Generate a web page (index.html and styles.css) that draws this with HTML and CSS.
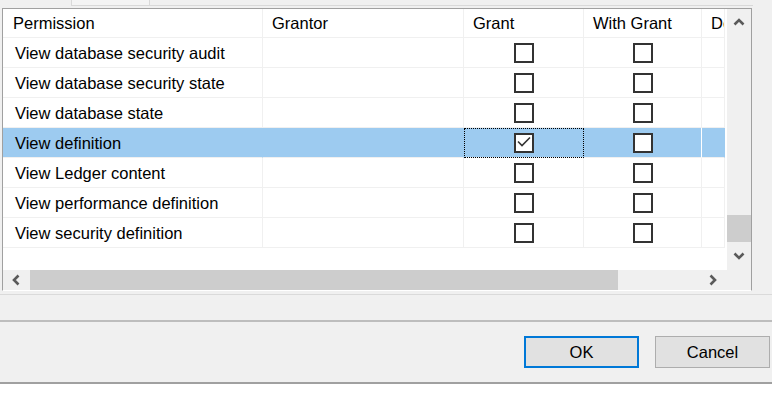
FILE: index.html
```html
<!DOCTYPE html>
<html>
<head>
<meta charset="utf-8">
<link rel="stylesheet" href="styles.css">
</head>
<body>
<div class="dialog">
  <div class="tabs"><div class="tab-gap"></div><div class="tab"></div><div class="tab-rest"></div></div>
  <div class="frame">
    <div class="table">
      <div class="row head">
        <div class="cell first">Permission</div>
        <div class="cell">Grantor</div>
        <div class="cell">Grant</div>
        <div class="cell">With Grant</div>
        <div class="cell">Deny</div>
      </div>
      <div class="row">
        <div class="cell name">View database security audit</div>
        <div class="cell"></div>
        <div class="cell box"><span class="cb"></span></div>
        <div class="cell box"><span class="cb"></span></div>
        <div class="cell"></div>
      </div>
      <div class="row">
        <div class="cell name">View database security state</div>
        <div class="cell"></div>
        <div class="cell box"><span class="cb"></span></div>
        <div class="cell box"><span class="cb"></span></div>
        <div class="cell"></div>
      </div>
      <div class="row">
        <div class="cell name">View database state</div>
        <div class="cell"></div>
        <div class="cell box"><span class="cb"></span></div>
        <div class="cell box"><span class="cb"></span></div>
        <div class="cell"></div>
      </div>
      <div class="row sel">
        <div class="cell name">View definition</div>
        <div class="cell"></div>
        <div class="cell box focus"><span class="cb"><svg class="check" viewBox="0 0 16 16" width="16" height="16"><polyline points="2,6.5 6,10.5 14,2.5" fill="none" stroke="#333" stroke-width="1.6"/></svg></span></div>
        <div class="cell box wg"><span class="cb"></span></div>
        <div class="cell"></div>
      </div>
      <div class="row">
        <div class="cell name">View Ledger content</div>
        <div class="cell"></div>
        <div class="cell box"><span class="cb"></span></div>
        <div class="cell box"><span class="cb"></span></div>
        <div class="cell"></div>
      </div>
      <div class="row">
        <div class="cell name">View performance definition</div>
        <div class="cell"></div>
        <div class="cell box"><span class="cb"></span></div>
        <div class="cell box"><span class="cb"></span></div>
        <div class="cell"></div>
      </div>
      <div class="row">
        <div class="cell name">View security definition</div>
        <div class="cell"></div>
        <div class="cell box"><span class="cb"></span></div>
        <div class="cell box"><span class="cb"></span></div>
        <div class="cell"></div>
      </div>
    </div>
    <div class="vscroll">
      <div class="sb-btn up"><svg viewBox="0 0 12 8" width="12" height="8"><polyline points="1.5,6.5 6,2 10.5,6.5" fill="none" stroke="#5a5a5a" stroke-width="2.6"/></svg></div>
      <div class="vtrack"><div class="vthumb"></div></div>
      <div class="sb-btn down"><svg viewBox="0 0 12 8" width="12" height="8"><polyline points="1.5,1.5 6,6 10.5,1.5" fill="none" stroke="#5a5a5a" stroke-width="2.6"/></svg></div>
    </div>
    <div class="hscroll">
      <div class="hbtn left"><svg viewBox="0 0 8 12" width="8" height="12"><polyline points="6.5,1.5 2,6 6.5,10.5" fill="none" stroke="#5a5a5a" stroke-width="2.6"/></svg></div>
      <div class="htrack"><div class="hthumb"></div></div>
      <div class="hbtn right"><svg viewBox="0 0 8 12" width="8" height="12"><polyline points="1.5,1.5 6,6 1.5,10.5" fill="none" stroke="#5a5a5a" stroke-width="2.6"/></svg></div>
    </div>
    <div class="corner"></div>
  </div>
  <div class="page-edge"></div>
  <div class="footer">
    <button class="btn ok">OK</button>
    <button class="btn">Cancel</button>
  </div>
</div>
</body>
</html>
```
FILE: styles.css
```css
* { box-sizing: border-box; }

html, body {
  margin: 0;
  background: #ffffff;
}

body {
  width: 772px;
  height: 403px;
  overflow: hidden;
  font-family: "Liberation Sans", Arial, sans-serif;
  font-size: 16.5px;
  color: #000;
}

.dialog {
  background: #f0f0f0;
}

.tabs {
  display: flex;
  height: 6px;
}
.tab-gap { width: 71px; }
.tab {
  width: 79px;
  border-left: 1px solid #d9d9d9;
  border-right: 1px solid #d9d9d9;
  border-bottom: 1px solid #d9d9d9;
  background: #f4f4f4;
}
.tab-rest {
  width: 603px;
  border-bottom: 1px solid #d9d9d9;
}

.frame {
  margin: 2px 0 0 2px;
  width: 750px;
  border: 1px solid #a0a0a0;
  border-bottom-color: #ffffff;
  display: grid;
  grid-template-columns: 724px 24px;
  grid-template-rows: 261px 20px;
}

.table {
  background: #ffffff;
  overflow: hidden;
}

.row {
  display: grid;
  grid-template-columns: 260px 201px 120px 118px 23px;
  height: 30px;
}
.row.head { height: 29px; }

.cell {
  border-right: 1px solid #f0f0f0;
  border-bottom: 1px solid #f0f0f0;
  display: flex;
  align-items: center;
  padding-left: 9px;
  padding-top: 1px;
  white-space: nowrap;
  overflow: hidden;
}
.cell.first { padding-left: 10px; }
.cell.name { padding-left: 12px; }
.cell.box {
  justify-content: center;
  padding-left: 0;
  padding-top: 0;
}

.row.sel .cell {
  background: #9dcbf0;
  border-right-color: #9dcbf0;
}
.row.sel .cell.wg { border-right-color: #ffffff; }
.row.sel .cell.focus {
  outline: 1px dotted #000;
  outline-offset: -1px;
}

.cb {
  width: 20px;
  height: 20px;
  border: 2px solid #333333;
  background: #ffffff;
  display: flex;
}
.check { display: block; }

.vscroll {
  display: flex;
  flex-direction: column;
  background: #f0f0f0;
}
.sb-btn {
  display: flex;
  align-items: center;
  justify-content: center;
}
.sb-btn.up { height: 26px; }
.sb-btn.down { height: 28px; }
.vtrack {
  flex: 1;
  display: flex;
  flex-direction: column;
  justify-content: flex-end;
}
.vthumb {
  height: 27px;
  background: #cdcdcd;
}

.hscroll {
  display: flex;
  background: #f0f0f0;
}
.hbtn {
  display: flex;
  align-items: center;
  justify-content: center;
}
.hbtn.left { width: 26px; }
.hbtn.right { width: 28px; }
.htrack {
  flex: 1;
  display: flex;
}
.hthumb {
  margin-left: 1px;
  width: 588px;
  background: #cdcdcd;
}
.corner { background: #f0f0f0; }

.page-edge {
  margin-top: 3px;
  border-top: 1px solid #dadada;
  height: 26px;
}

.footer {
  height: 64px;
  border-top: 2px solid #bdbdbd;
  border-bottom: 2px solid #a0a0a0;
  display: flex;
  justify-content: flex-end;
  align-items: center;
  gap: 16px;
  padding-right: 2px;
}

.btn {
  width: 115px;
  height: 32px;
  padding: 0;
  margin: 0;
  background: #e1e1e1;
  border: 1px solid #adadad;
  font-family: inherit;
  font-size: 16.5px;
  color: #000;
}
.btn.ok { border: 2px solid #0078d7; }
```
